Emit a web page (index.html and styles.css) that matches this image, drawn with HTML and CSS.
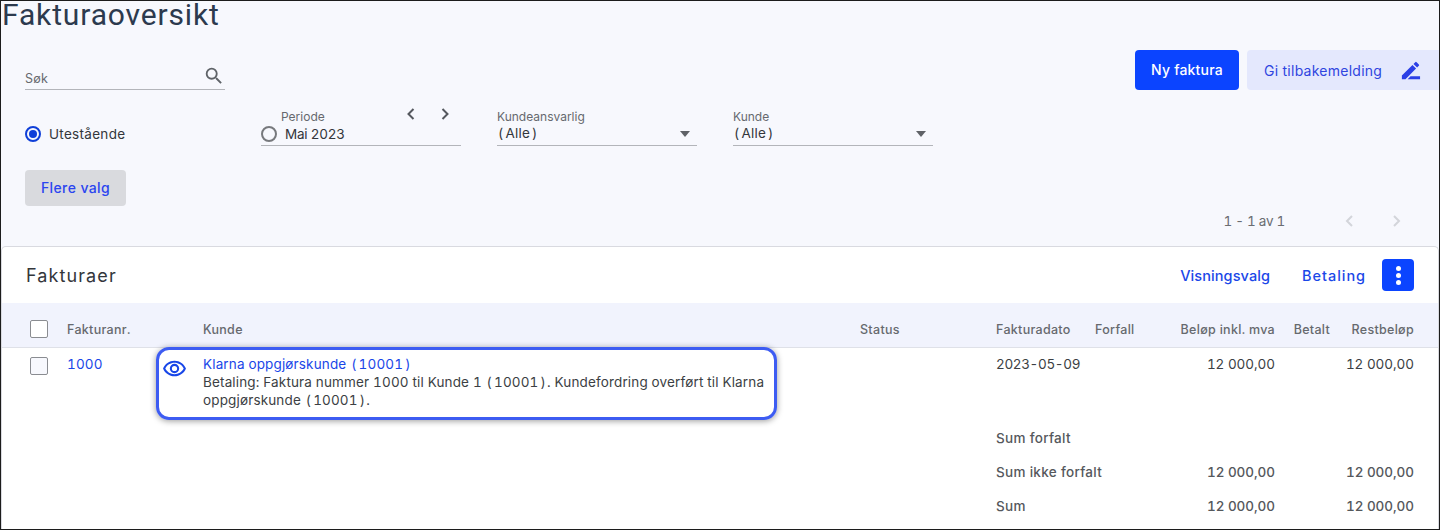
FILE: index.html
```html
<!DOCTYPE html>
<html lang="no">
<head>
<meta charset="utf-8">
<title>Fakturaoversikt</title>
<link rel="stylesheet" href="styles.css">
</head>
<body>
<div class="frame">
  <div class="top">
    <div class="actions">
      <button class="btn primary">Ny faktura</button>
      <button class="btn feedback">Gi tilbakemelding
        <svg class="pen" viewBox="0 0 24 24" width="24" height="24"><path fill="#2b3fe6" d="M3 17.25V21h3.75L17.81 9.94l-3.75-3.75L3 17.25zM20.71 7.04a1 1 0 0 0 0-1.41l-2.34-2.34a1 1 0 0 0-1.41 0l-1.83 1.83 3.75 3.75 1.83-1.83z"/><path fill="#2b3fe6" d="M12 18h10v3H9z"/></svg>
      </button>
    </div>
    <h1 class="title">Fakturaoversikt</h1>
    <div class="search">
      <span class="placeholder">Søk</span>
      <svg viewBox="0 0 24 24" width="22" height="22"><path fill="#5f6368" d="M15.5 14h-.79l-.28-.27A6.47 6.47 0 0 0 16 9.5 6.5 6.5 0 1 0 9.5 16c1.61 0 3.09-.59 4.23-1.57l.27.28v.79l5 4.99L20.49 19l-4.99-5zm-6 0C7.01 14 5 11.99 5 9.5S7.01 5 9.5 5 14 7.01 14 9.5 11.99 14 9.5 14z"/></svg>
    </div>
    <div class="filters">
      <label class="radio-opt"><span class="radio on"></span>Utestående</label>
      <div class="period">
        <span class="radio"></span>
        <div class="period-body">
          <div class="period-top">
            <span class="field-label">Periode</span>
            <span class="arrows">
              <svg viewBox="0 0 10 14" width="10" height="14"><path d="M7.5 2 L2.5 7 L7.5 12" fill="none" stroke="#55585e" stroke-width="2"/></svg>
              <svg viewBox="0 0 10 14" width="10" height="14"><path d="M2.5 2 L7.5 7 L2.5 12" fill="none" stroke="#55585e" stroke-width="2"/></svg>
            </span>
          </div>
          <span class="field-value month">Mai 2023</span>
        </div>
      </div>
      <div class="select">
        <span class="field-label">Kundeansvarlig</span>
        <span class="field-value"><span class="po">(</span>Alle<span class="pc">)</span><i class="caret"></i></span>
      </div>
      <div class="select">
        <span class="field-label">Kunde</span>
        <span class="field-value"><span class="po">(</span>Alle<span class="pc">)</span><i class="caret"></i></span>
      </div>
    </div>
    <button class="btn more">Flere valg</button>
    <div class="pager">
      <span class="pager-text">1 - 1 av 1</span>
      <svg viewBox="0 0 10 14" width="10" height="14"><path d="M8 2 L3 7 L8 12" fill="none" stroke="#d3d5da" stroke-width="2"/></svg>
      <svg viewBox="0 0 10 14" width="10" height="14"><path d="M2 2 L7 7 L2 12" fill="none" stroke="#d3d5da" stroke-width="2"/></svg>
    </div>
  </div>
  <section class="card">
    <div class="card-head">
      <h2 class="card-title">Fakturaer</h2>
      <a class="link-strong">Visningsvalg</a>
      <a class="link-strong wide">Betaling</a>
      <button class="kebab"><i></i><i></i><i></i></button>
    </div>
    <div class="grid head-row">
      <span class="check"></span>
      <span>Fakturanr.</span>
      <span>Kunde</span>
      <span>Status</span>
      <span>Fakturadato</span>
      <span>Forfall</span>
      <span class="num">Beløp inkl. mva</span>
      <span class="num">Betalt</span>
      <span class="num">Restbeløp</span>
    </div>
    <div class="grid body-row">
      <span class="check"></span>
      <a class="link">1000</a>
      <div class="customer">
        <a class="link">Klarna oppgjørskunde <span class="po">(</span>10001<span class="pc">)</span></a>
        <div>Betaling: Faktura nummer 1000 til Kunde 1 <span class="po">(</span>10001<span class="pc">)</span>. Kundefordring overført til Klarna<br>oppgjørskunde <span class="po">(</span>10001<span class="pc">)</span>.</div>
        <div class="callout"></div>
        <svg class="eye" viewBox="0 0 24 24" width="25" height="25"><path fill="#1846e8" d="M12 4.5C7 4.5 2.73 7.61 1 12c1.73 4.39 6 7.5 11 7.5s9.27-3.11 11-7.5c-1.73-4.39-6-7.5-11-7.5zm0 13c-3.79 0-7.17-2.13-8.82-5.5C4.83 8.63 8.21 6.5 12 6.5s7.17 2.13 8.82 5.5c-1.65 3.37-5.03 5.5-8.82 5.5zM12 7.5a4.5 4.5 0 1 0 0 9 4.5 4.5 0 0 0 0-9zm0 7a2.5 2.5 0 1 1 0-5 2.5 2.5 0 0 1 0 5z"/></svg>
      </div>
      <span></span>
      <span class="date">2023-05-09</span>
      <span></span>
      <span class="num">12 000,00</span>
      <span></span>
      <span class="num">12 000,00</span>
    </div>
    <div class="grid sum-row"><span class="sum-label">Sum forfalt</span></div>
    <div class="grid sum-row"><span class="sum-label">Sum ikke forfalt</span><span class="num c7">12 000,00</span><span class="num c9">12 000,00</span></div>
    <div class="grid sum-row"><span class="sum-label">Sum</span><span class="num c7">12 000,00</span><span class="num c9">12 000,00</span></div>
  </section>
</div>
</body>
</html>
```
FILE: styles.css
```css
* { box-sizing: border-box; }
html, body { margin: 0; padding: 0; }
body { font-family: Inter, "Noto Sans", sans-serif; font-size: 13.5px; color: #3c3f44; background: #f7f8fd; font-variant-numeric: tabular-nums; letter-spacing: .15px; }
.frame { width: 1440px; height: 530px; border: 1px solid #1c1c1c; background: #f7f8fd; overflow: hidden; display: flex; flex-direction: column; }
.top { height: 245px; position: relative; padding: 0 0 0 24px; flex: none; }
.title { margin: 0 0 0 -23px; font: 400 30px/28px Roboto, Inter, sans-serif; letter-spacing: .85px; color: #2c3a4e; height: 32px; }
.actions { float: right; display: flex; gap: 8px; margin-top: 49px; }
.btn { font: 500 14px Inter, sans-serif; border: 0; border-radius: 4px; height: 40px; padding: 0; letter-spacing: .2px; }
.primary { width: 104px; background: #0b44ff; color: #fff; padding-bottom: 1px; }
.feedback { width: 192px; background: #e4e8fd; color: #2f45e0; font-weight: 400; border-radius: 4px 0 0 4px; display: flex; align-items: center; padding-left: 17px; gap: 17px; letter-spacing: .25px; }
.pen { flex: none; width: 23px; height: 23px; }
.search { width: 200px; height: 25px; margin-top: 32px; border-bottom: 1px solid #b3b5ba; display: flex; justify-content: space-between; align-items: center; }
.placeholder { color: #66696e; font-size: 12.5px; padding-top: 3px; letter-spacing: .3px; }
.search svg { margin-top: -3px; }
.filters { display: flex; margin-top: 19px; height: 37px; }
.radio-opt { width: 236px; display: flex; align-items: center; gap: 8px; color: #33363b; padding-top: 12px; letter-spacing: .3px; }
.radio { width: 16px; height: 16px; border-radius: 50%; border: 2px solid #77797d; flex: none; display: block; }
.radio.on { border-color: #0f3fd8; position: relative; }
.radio.on::after { content: ""; position: absolute; inset: 2px; border-radius: 50%; background: #0f3fd8; }
.period { width: 200px; margin-right: 36px; border-bottom: 1px solid #b3b5ba; display: flex; gap: 8px; align-items: flex-end; padding-bottom: 3px; }
.period-body { flex: 1; }
.period-top { display: flex; justify-content: space-between; height: 17px; margin-left: -4px; }
.arrows { display: flex; gap: 24px; margin-right: 11px; margin-top: -3px; }
.field-label { display: block; font-size: 12px; color: #66696e; line-height: 14px; letter-spacing: 0; }
.field-value { display: block; font-size: 13.5px; line-height: 15px; color: #33363b; letter-spacing: .2px; position: relative; }
.month { letter-spacing: -.25px; }
.select { width: 200px; margin-right: 36px; border-bottom: 1px solid #b3b5ba; padding-top: 1px; height: 37px; }
.select .field-label { margin-bottom: 2px; }
.po { margin: 0 2px 0 1px; }
.pc { margin: 0 1px 0 2px; }
.caret { position: absolute; right: 7px; top: 5px; border: 5px solid transparent; border-top: 6px solid #5f6267; border-bottom: 0; }
.more { display: block; width: 101px; height: 36px; margin-top: 24px; background: #d9dade; color: #2b45f0; letter-spacing: .4px; padding-bottom: 1px; }
.pager { position: absolute; right: 37px; top: 212px; display: flex; align-items: center; color: #6a6d72; letter-spacing: -.3px; }
.pager-text { margin-right: 59px; }
.pager svg + svg { margin-left: 38px; }
.card { flex: 1; background: #fff; border: 1px solid #d9dae0; border-bottom: 0; border-radius: 5px 5px 0 0; }
.card-head { height: 56px; display: flex; align-items: center; padding: 0 24px 0 24px; }
.card-title { margin: 0 auto 0 0; font: 400 18px Inter, sans-serif; color: #33363b; letter-spacing: 1.1px; }
.link-strong { color: #1a47e8; font-size: 14.5px; font-weight: 500; margin-right: 32px; letter-spacing: .1px; }
.wide { letter-spacing: .95px; margin-right: 16px; }
.kebab { width: 32px; height: 32px; border: 0; border-radius: 4px; background: #0b44ff; display: flex; flex-direction: column; align-items: center; justify-content: center; gap: 2px; padding: 0; }
.kebab i { width: 5px; height: 5px; border-radius: 50%; background: #fff; display: block; }
.grid { display: grid; grid-template-columns: 37px 136px 657px 136px 99px 60px 120px 55px 84px; padding-left: 28px; }
.head-row { height: 45px; background: #f1f3fd; border-bottom: 1px solid #dfe1e8; align-items: center; font-size: 12.5px; font-weight: 500; color: #66696e; padding-top: 8px; letter-spacing: .3px; }
.num { text-align: right; }
.body-row .num, .sum-row .num { letter-spacing: -.05px; }
.date { letter-spacing: -.35px; }
.check { width: 18px; height: 18px; border: 1px solid #8a8c91; border-radius: 2px; background: #fff; display: block; }
.body-row .check { background: #f7f8fd; margin-top: 2px; }
.body-row { height: 73px; padding-top: 7px; line-height: 18px; }
.link { color: #1a47e8; }
.customer { position: relative; width: 574px; }
.callout { position: absolute; left: -47px; top: -8px; width: 621px; height: 73px; border: 3px solid #3d5cf2; border-radius: 13px; box-shadow: 0 1px 6px rgba(0,0,0,.4); }
.eye { position: absolute; left: -41px; top: 1px; }
.sum-row { height: 34px; align-items: center; color: #55585c; font-weight: 500; letter-spacing: .3px; }
.sum-label { grid-column: 5 / span 2; grid-row: 1; white-space: nowrap; }
.c7 { grid-column: 7; grid-row: 1; }
.c9 { grid-column: 9; grid-row: 1; }
```
